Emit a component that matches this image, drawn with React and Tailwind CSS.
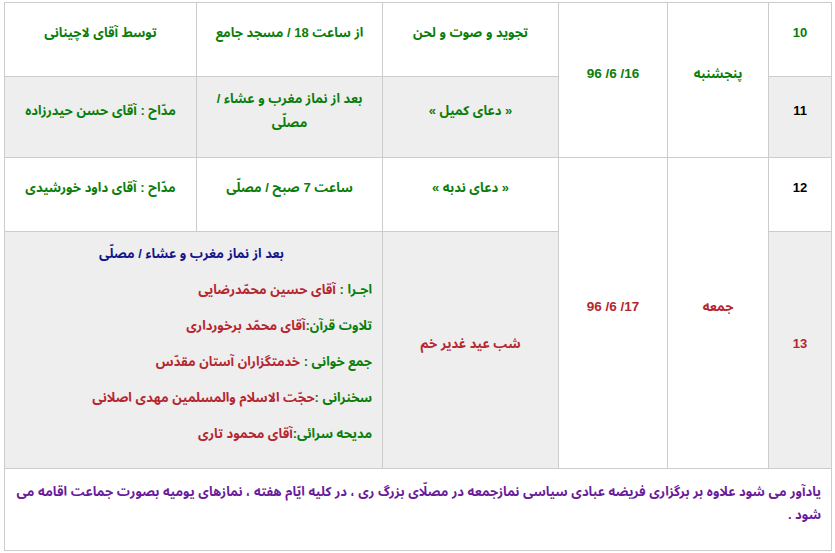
import React from "react";

const G = "text-[#0a7d0a]";
const R = "text-[#b5262e]";
const B = "text-[#14148a]";
const P = "text-[#6a1b9a]";

const td = "border border-[#cccccc] text-center align-middle pb-[13px] px-[6px]";

export default function App() {
  return (
    <div className="bg-white w-[835px] h-[553px] overflow-hidden pt-[2px] pl-[4px]">
      <table
        dir="rtl"
        className="border-collapse table-fixed w-[827px] font-bold text-[13px] leading-[24px]"
        style={{ fontFamily: '"Liberation Sans", "Noto Sans Arabic", sans-serif' }}
      >
        <colgroup>
          <col className="w-[63px]" />
          <col className="w-[101px]" />
          <col className="w-[109px]" />
          <col className="w-[176px]" />
          <col className="w-[186px]" />
          <col className="w-[192px]" />
        </colgroup>
        <tbody>
          <tr className="bg-white">
            <td className={`${td} h-[74px] ${G}`}>10</td>
            <td rowSpan={2} className={`${td} bg-white ${G}`}>پنجشنبه</td>
            <td rowSpan={2} className={`${td} bg-white ${G} text-[13.5px]`}>
              <span dir="ltr">96 /6 /16</span>
            </td>
            <td className={`${td} ${G}`}>تجوید و صوت و لحن</td>
            <td className={`${td} ${G}`}>از ساعت 18 / مسجد جامع</td>
            <td className={`${td} ${G}`}>توسط آقای لاچینانی</td>
          </tr>
          <tr className="bg-[#eeeeee]">
            <td className={`${td} h-[81px] text-black`}>11</td>
            <td className={`${td} ${G}`}>« دعای کمیل »</td>
            <td className={`${td} ${G}`}>
              بعد از نماز مغرب و عشاء /
              <br />
              مصلّی
            </td>
            <td className={`${td} ${G}`}>مدّاح : آقای حسن حیدرزاده</td>
          </tr>
          <tr className="bg-white">
            <td className={`${td} h-[74px] text-black`}>12</td>
            <td rowSpan={2} className={`${td} bg-white ${R}`}>جمعه</td>
            <td rowSpan={2} className={`${td} bg-white ${R} text-[13.5px]`}>
              <span dir="ltr">96 /6 /17</span>
            </td>
            <td className={`${td} ${G}`}>« دعای ندبه »</td>
            <td className={`${td} ${G}`}>ساعت 7 صبح / مصلّی</td>
            <td className={`${td} ${G}`}>مدّاح : آقای داود خورشیدی</td>
          </tr>
          <tr className="bg-[#eeeeee]">
            <td className={`${td} h-[237px] ${R}`}>13</td>
            <td className={`${td} ${R}`}>شب عید غدیر خم</td>
            <td colSpan={2} className={`${td} pr-[10px]`}>
              <div className="flex flex-col gap-[12px]">
                <p className={`${B} text-center`}>بعد از نماز مغرب و عشاء / مصلّی</p>
                <p className="text-right">
                  <span className={G}>اجـرا : </span>
                  <span className={R}>آقای حسین محمّدرضایی</span>
                </p>
                <p className="text-right">
                  <span className={G}>تلاوت قرآن:</span>
                  <span className={R}>آقای محمّد برخورداری</span>
                </p>
                <p className="text-right">
                  <span className={G}>جمع خوانی : </span>
                  <span className={R}>خدمتگزاران آستان مقدّس</span>
                </p>
                <p className="text-right">
                  <span className={G}>سخنرانی :</span>
                  <span className={R}>حجّت الاسلام والمسلمین مهدی اصلانی</span>
                </p>
                <p className="text-right">
                  <span className={G}>مدیحه سرائی:</span>
                  <span className={R}>آقای محمود تاری</span>
                </p>
              </div>
            </td>
          </tr>
          <tr className="bg-white">
            <td
              colSpan={6}
              className={`border border-[#cccccc] h-[81px] align-top text-right pt-[11px] pb-[24px] px-[10px] leading-[23px] ${P}`}
            >
              یادآور می شود علاوه بر برگزاری فریضه عبادی سیاسی نمازجمعه در مصلّای بزرگ ری ، در کلیه ایّام هفته ، نمازهای یومیه بصورت جماعت اقامه می شود .
            </td>
          </tr>
        </tbody>
      </table>
    </div>
  );
}
